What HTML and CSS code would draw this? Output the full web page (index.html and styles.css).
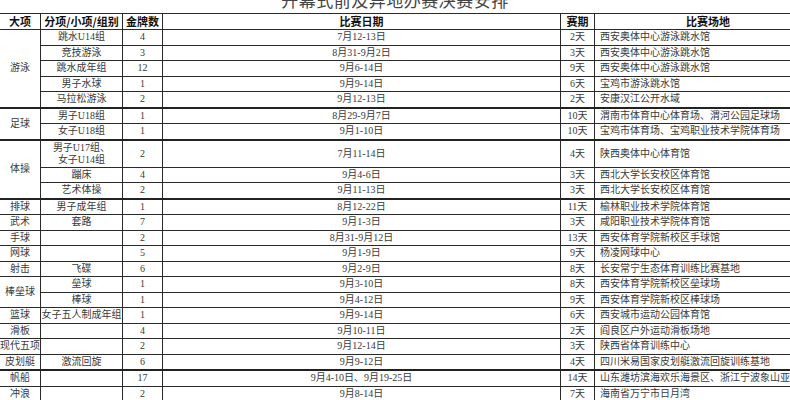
FILE: index.html
```html
<!DOCTYPE html>
<html lang="zh-CN">
<head>
<meta charset="utf-8">
<title>开幕式前及异地办赛决赛安排</title>
<link rel="stylesheet" href="styles.css">
</head>
<body>
<div class="page">
  <h1 class="title">开幕式前及异地办赛决赛安排</h1>
  <table class="sched">
    <colgroup>
      <col class="c-big"><col class="c-sub"><col class="c-gold"><col class="c-date"><col class="c-days"><col class="c-venue">
    </colgroup>
    <thead>
      <tr><th>大项</th><th>分项/小项/组别</th><th>金牌数</th><th>比赛日期</th><th>赛期</th><th>比赛场地</th></tr>
    </thead>
    <tbody>
      <tr><td rowspan="5" class="big">游泳</td><td>跳水U14组</td><td>4</td><td>7月12-13日</td><td>2天</td><td class="venue">西安奥体中心游泳跳水馆</td></tr>
      <tr><td>竞技游泳</td><td>3</td><td>8月31-9月2日</td><td>3天</td><td class="venue">西安奥体中心游泳跳水馆</td></tr>
      <tr><td>跳水成年组</td><td>12</td><td>9月6-14日</td><td>9天</td><td class="venue">西安奥体中心游泳跳水馆</td></tr>
      <tr><td>男子水球</td><td>1</td><td>9月9-14日</td><td>6天</td><td class="venue">宝鸡市游泳跳水馆</td></tr>
      <tr><td>马拉松游泳</td><td>2</td><td>9月12-13日</td><td>2天</td><td class="venue">安康汉江公开水域</td></tr>
      <tr class="grp"><td rowspan="2" class="big">足球</td><td>男子U18组</td><td>1</td><td>8月29-9月7日</td><td>10天</td><td class="venue">渭南市体育中心体育场、渭河公园足球场</td></tr>
      <tr><td>女子U18组</td><td>1</td><td>9月1-10日</td><td>10天</td><td class="venue">宝鸡市体育场、宝鸡职业技术学院体育场</td></tr>
      <tr class="grp tall"><td rowspan="3" class="big">体操</td><td class="two">男子U17组、<br>女子U14组</td><td>2</td><td>7月11-14日</td><td>4天</td><td class="venue">陕西奥体中心体育馆</td></tr>
      <tr><td>蹦床</td><td>4</td><td>9月4-6日</td><td>3天</td><td class="venue">西北大学长安校区体育馆</td></tr>
      <tr><td>艺术体操</td><td>2</td><td>9月11-13日</td><td>3天</td><td class="venue">西北大学长安校区体育馆</td></tr>
      <tr class="grp"><td class="big">排球</td><td>男子成年组</td><td>1</td><td>8月12-22日</td><td>11天</td><td class="venue">榆林职业技术学院体育馆</td></tr>
      <tr><td class="big">武术</td><td>套路</td><td>7</td><td>9月1-3日</td><td>3天</td><td class="venue">咸阳职业技术学院体育馆</td></tr>
      <tr><td class="big">手球</td><td></td><td>2</td><td>8月31-9月12日</td><td>13天</td><td class="venue">西安体育学院新校区手球馆</td></tr>
      <tr><td class="big">网球</td><td></td><td>5</td><td>9月1-9日</td><td>9天</td><td class="venue">杨凌网球中心</td></tr>
      <tr><td class="big">射击</td><td>飞碟</td><td>6</td><td>9月2-9日</td><td>8天</td><td class="venue">长安常宁生态体育训练比赛基地</td></tr>
      <tr><td rowspan="2" class="big">棒垒球</td><td>垒球</td><td>1</td><td>9月3-10日</td><td>8天</td><td class="venue">西安体育学院新校区垒球场</td></tr>
      <tr><td>棒球</td><td>1</td><td>9月4-12日</td><td>9天</td><td class="venue">西安体育学院新校区棒球场</td></tr>
      <tr><td class="big">篮球</td><td>女子五人制成年组</td><td>1</td><td>9月9-14日</td><td>6天</td><td class="venue">西安城市运动公园体育馆</td></tr>
      <tr><td class="big">滑板</td><td></td><td>4</td><td>9月10-11日</td><td>2天</td><td class="venue">阎良区户外运动滑板场地</td></tr>
      <tr><td class="big">现代五项</td><td></td><td>2</td><td>9月12-14日</td><td>3天</td><td class="venue">陕西省体育训练中心</td></tr>
      <tr><td class="big">皮划艇</td><td>激流回旋</td><td>6</td><td>9月9-12日</td><td>4天</td><td class="venue">四川米易国家皮划艇激流回旋训练基地</td></tr>
      <tr class="grp"><td class="big">帆船</td><td></td><td>17</td><td>9月4-10日、9月19-25日</td><td>14天</td><td class="venue">山东潍坊滨海欢乐海景区、浙江宁波象山亚帆中心</td></tr>
      <tr><td class="big">冲浪</td><td></td><td>2</td><td>9月8-14日</td><td>7天</td><td class="venue">海南省万宁市日月湾</td></tr>
    </tbody>
  </table>
</div>
</body>
</html>
```
FILE: styles.css
```css
html, body {
  margin: 0;
  padding: 0;
  background: #ffffff;
}
body {
  width: 790px;
  height: 400px;
  overflow: hidden;
  font-family: "Liberation Serif", "Noto Sans CJK SC", serif;
  color: #3a3a3a;
}
.page {
  position: relative;
  width: 790px;
}
.title {
  margin: -9px 0 0 0;
  height: 22px;
  line-height: 18px;
  font-size: 17px;
  font-weight: 400;
  text-align: center;
  color: #444;
  font-family: "Noto Sans CJK SC", serif;
  letter-spacing: 0.5px;
}
.sched {
  border-collapse: collapse;
  table-layout: fixed;
  width: 822px;
  margin-left: -1px;
  font-size: 10px;
}
.c-big { width: 41px; }
.c-sub { width: 82px; }
.c-gold { width: 40px; }
.c-date { width: 398px; }
.c-days { width: 34px; }
.c-venue { width: 227px; }
.sched th, .sched td {
  border: 1px solid #2a2a2a;
  padding: 0;
  text-align: center;
  vertical-align: middle;
  white-space: nowrap;
  overflow: hidden;
}
.sched th {
  height: 15px;
  font-family: "Noto Sans CJK SC", sans-serif;
  font-weight: 700;
  font-size: 11px;
  line-height: 15px;
  color: #111;
}
.sched td {
  height: 14.5px;
  line-height: 14px;
  font-family: "Liberation Serif", "Noto Sans CJK SC", serif;
}
.sched td.venue {
  text-align: left;
  padding-left: 5px;
  text-overflow: clip;
}
.sched tr.tall td {
  height: 26px;
}
.sched td.two {
  line-height: 12px;
  white-space: normal;
}
.sched tr.grp td {
  border-top: 2px solid #222;
}
```
